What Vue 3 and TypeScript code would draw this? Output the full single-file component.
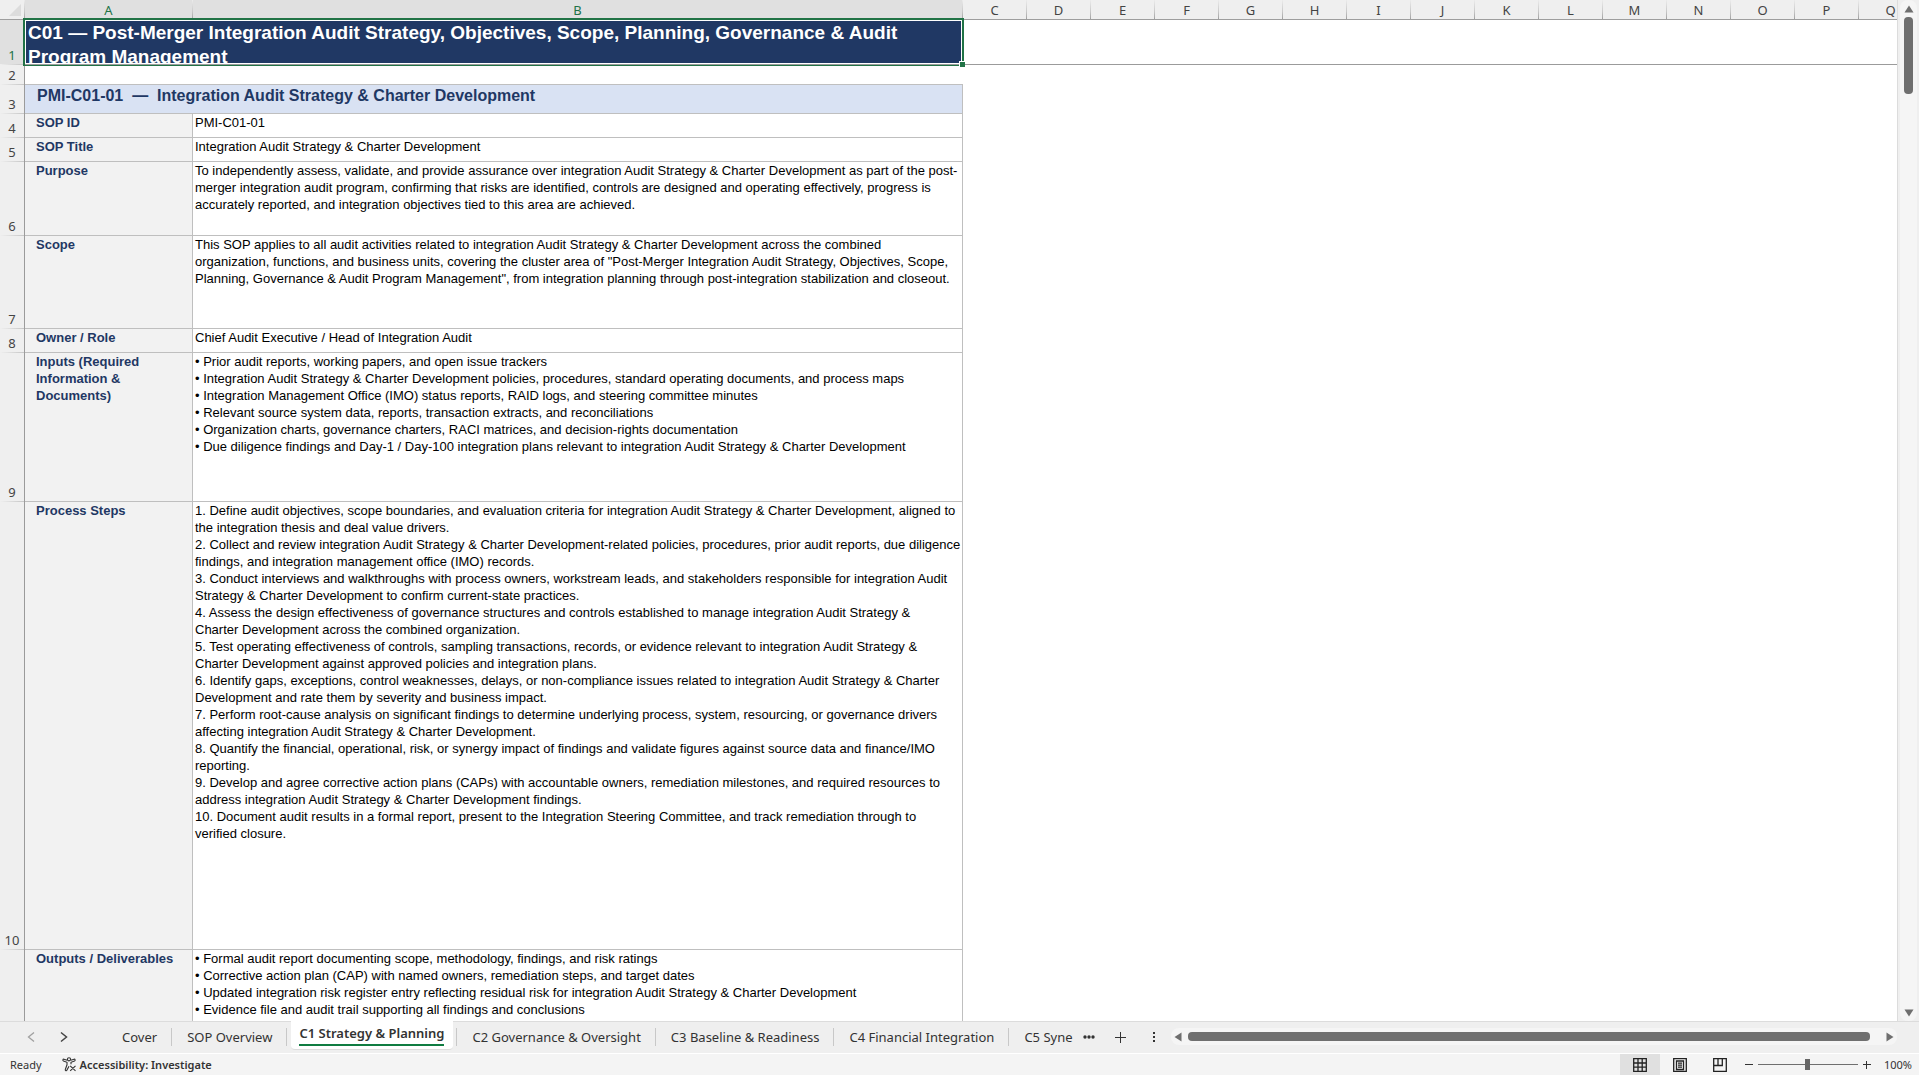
<script setup lang="ts">
interface Row {
  num: number
  size: string
  label: string[]
  lines: string[]
}

const columns: string[] = 'CDEFGHIJKLMNOPQ'.split('')

const sectionTitle = 'PMI-C01-01  —  Integration Audit Strategy & Charter Development'

const rows: Row[] = [
  { num: 4, size: 'r-single', label: ['SOP ID'], lines: ['PMI-C01-01'] },
  { num: 5, size: 'r-single', label: ['SOP Title'], lines: ['Integration Audit Strategy & Charter Development'] },
  {
    num: 6,
    size: 'r-purpose',
    label: ['Purpose'],
    lines: [
      'To independently assess, validate, and provide assurance over integration Audit Strategy & Charter Development as part of the post-',
      'merger integration audit program, confirming that risks are identified, controls are designed and operating effectively, progress is',
      'accurately reported, and integration objectives tied to this area are achieved.',
    ],
  },
  {
    num: 7,
    size: 'r-scope',
    label: ['Scope'],
    lines: [
      'This SOP applies to all audit activities related to integration Audit Strategy & Charter Development across the combined',
      'organization, functions, and business units, covering the cluster area of "Post-Merger Integration Audit Strategy, Objectives, Scope,',
      'Planning, Governance & Audit Program Management", from integration planning through post-integration stabilization and closeout.',
    ],
  },
  { num: 8, size: 'r-single', label: ['Owner / Role'], lines: ['Chief Audit Executive / Head of Integration Audit'] },
  {
    num: 9,
    size: 'r-inputs',
    label: ['Inputs (Required', 'Information &', 'Documents)'],
    lines: [
      '• Prior audit reports, working papers, and open issue trackers',
      '• Integration Audit Strategy & Charter Development policies, procedures, standard operating documents, and process maps',
      '• Integration Management Office (IMO) status reports, RAID logs, and steering committee minutes',
      '• Relevant source system data, reports, transaction extracts, and reconciliations',
      '• Organization charts, governance charters, RACI matrices, and decision-rights documentation',
      '• Due diligence findings and Day-1 / Day-100 integration plans relevant to integration Audit Strategy & Charter Development',
    ],
  },
  {
    num: 10,
    size: 'r-steps',
    label: ['Process Steps'],
    lines: [
      '1. Define audit objectives, scope boundaries, and evaluation criteria for integration Audit Strategy & Charter Development, aligned to',
      'the integration thesis and deal value drivers.',
      '2. Collect and review integration Audit Strategy & Charter Development-related policies, procedures, prior audit reports, due diligence',
      'findings, and integration management office (IMO) records.',
      '3. Conduct interviews and walkthroughs with process owners, workstream leads, and stakeholders responsible for integration Audit',
      'Strategy & Charter Development to confirm current-state practices.',
      '4. Assess the design effectiveness of governance structures and controls established to manage integration Audit Strategy &',
      'Charter Development across the combined organization.',
      '5. Test operating effectiveness of controls, sampling transactions, records, or evidence relevant to integration Audit Strategy &',
      'Charter Development against approved policies and integration plans.',
      '6. Identify gaps, exceptions, control weaknesses, delays, or non-compliance issues related to integration Audit Strategy & Charter',
      'Development and rate them by severity and business impact.',
      '7. Perform root-cause analysis on significant findings to determine underlying process, system, resourcing, or governance drivers',
      'affecting integration Audit Strategy & Charter Development.',
      '8. Quantify the financial, operational, risk, or synergy impact of findings and validate figures against source data and finance/IMO',
      'reporting.',
      '9. Develop and agree corrective action plans (CAPs) with accountable owners, remediation milestones, and required resources to',
      'address integration Audit Strategy & Charter Development findings.',
      '10. Document audit results in a formal report, present to the Integration Steering Committee, and track remediation through to',
      'verified closure.',
    ],
  },
  {
    num: 11,
    size: 'r-outputs',
    label: ['Outputs / Deliverables'],
    lines: [
      '• Formal audit report documenting scope, methodology, findings, and risk ratings',
      '• Corrective action plan (CAP) with named owners, remediation steps, and target dates',
      '• Updated integration risk register entry reflecting residual risk for integration Audit Strategy & Charter Development',
      '• Evidence file and audit trail supporting all findings and conclusions',
    ],
  },
]

const tabs: string[] = [
  'Cover',
  'SOP Overview',
  'C1 Strategy & Planning',
  'C2 Governance & Oversight',
  'C3 Baseline & Readiness',
  'C4 Financial Integration',
  'C5 Syne',
]
const activeTab = 2
</script>

<template>
  <div class="app">
    <div class="work">
      <div class="sheet">
        <table>
          <colgroup>
            <col class="w-num" />
            <col class="w-a" />
            <col class="w-b" />
            <col v-for="c in columns" :key="c" class="w-std" />
          </colgroup>
          <thead>
            <tr>
              <th class="corner"><svg width="24" height="19" viewBox="0 0 24 19"><path d="M21 4v12H9z" fill="#dcdcdc" /></svg></th>
              <th class="sel">A</th>
              <th class="sel">B</th>
              <th v-for="c in columns" :key="c">{{ c }}</th>
            </tr>
          </thead>
          <tbody>
            <tr class="r-title">
              <th class="sel">1</th>
              <td colspan="2" class="title">
                <div class="title-text">C01 — Post-Merger Integration Audit Strategy, Objectives, Scope, Planning, Governance &amp; Audit<br />Program Management</div>
                <div class="selection"></div>
                <div class="handle"></div>
              </td>
              <td :colspan="columns.length" class="frozen"></td>
            </tr>
            <tr class="r-blank">
              <th>2</th>
              <td colspan="2" class="blank"></td>
            </tr>
            <tr class="r-section">
              <th>3</th>
              <td colspan="2" class="section">{{ sectionTitle }}</td>
            </tr>
            <tr v-for="r in rows" :key="r.num" :class="r.size">
              <th>{{ r.num === 11 ? '' : r.num }}</th>
              <td class="label"><div v-for="l in r.label" :key="l">{{ l }}</div></td>
              <td class="text"><div v-for="l in r.lines" :key="l">{{ l }}</div></td>
            </tr>
          </tbody>
        </table>
      </div>
      <div class="vscroll">
        <button aria-label="Scroll up"><svg width="10" height="8" viewBox="0 0 10 8"><path d="M5 0.5 9.5 7.5H.5z" /></svg></button>
        <div class="vthumb"></div>
        <button class="down" aria-label="Scroll down"><svg width="10" height="8" viewBox="0 0 10 8"><path d="M5 7.5 .5 .5h9z" /></svg></button>
      </div>
    </div>

    <div class="tabbar">
      <div class="arrows">
        <button aria-label="Previous sheet"><svg width="8" height="12" viewBox="0 0 8 12"><path d="M7 1.5 1.5 6 7 10.5" fill="none" stroke="#a0a0a0" stroke-width="1.3" /></svg></button>
        <button aria-label="Next sheet"><svg width="8" height="12" viewBox="0 0 8 12"><path d="M1 1.5 6.500 6 1 10.500" fill="none" stroke="#444" stroke-width="1.5" /></svg></button>
      </div>
      <div class="tabs">
        <button v-for="(t, i) in tabs" :key="t" class="tab" :class="{ active: i === activeTab, last: i === tabs.length - 1 }"><span>{{ t }}</span></button>
      </div>
      <button class="more" aria-label="More sheets"><svg width="12" height="4" viewBox="0 0 12 4"><g fill="#333"><circle cx="2" cy="2" r="1.700" /><circle cx="6" cy="2" r="1.700" /><circle cx="10" cy="2" r="1.700" /></g></svg></button>
      <button class="add" aria-label="New sheet"><svg width="11" height="11" viewBox="0 0 11 11"><path d="M5.500 0v11M0 5.500h11" stroke="#333" /></svg></button>
      <button class="kebab" aria-label="Resize tabs"><svg width="4" height="12" viewBox="0 0 4 12"><g fill="#333"><path d="M1 1h2v2H1zM1 5h2v2H1zM1 9h2v2H1z" /></g></svg></button>
      <div class="hscroll">
        <button aria-label="Scroll left"><svg width="8" height="10" viewBox="0 0 8 10"><path d="M.5 5 7.500 .5v9z" /></svg></button>
        <div class="hthumb"></div>
        <button aria-label="Scroll right"><svg width="8" height="10" viewBox="0 0 8 10"><path d="M7.500 5 .5 .5v9z" /></svg></button>
      </div>
    </div>

    <div class="status">
      <span class="ready">Ready</span>
      <button class="access">
        <svg width="15" height="15" viewBox="0 0 15 15" fill="none" stroke="#333" stroke-width="1.100"><circle cx="7" cy="2.300" r="1.600" /><path d="M5.300 3.300 2 2.200C.8 2 .4 3.400 1.500 3.900L5 5.300v2.500L3.300 12.500c-.3 1.200 1.200 1.700 1.700.6L7 9.200M8.700 3.300 12 2.200c1.200-.2 1.600 1.200.5 1.700L9 5.300v1.900M8.200 8.800l5.300 5M13.500 8.800l-5.300 5" /></svg>
        <span>Accessibility: Investigate</span>
      </button>
      <div class="views">
        <button class="on" aria-label="Normal"><svg width="14" height="14" viewBox="0 0 14 14" fill="none" stroke="#222" stroke-width="1.300"><path d="M.7.7h12.600v12.600H.7zM5 .7v12.600M9.200.7v12.600M.7 5h12.600M.7 9.200h12.600" /></svg></button>
        <button aria-label="Page layout"><svg width="14" height="14" viewBox="0 0 14 14" fill="none" stroke="#222" stroke-width="1.300"><path d="M.7.7h12.600v12.600H.7zM3.500 3h7v8.500h-7zM5 5.200h4M5 7.200h4M5 9.200h4" /></svg></button>
        <button aria-label="Page break preview"><svg width="14" height="14" viewBox="0 0 14 14" fill="none" stroke="#222" stroke-width="1.300"><path d="M.7.7h12.600v12.600H.7zM.7 7.500h8.600V.7M5 .7v6.800" /></svg></button>
      </div>
      <button class="zoom-btn" aria-label="Zoom out"><svg width="8" height="8" viewBox="0 0 8 8"><path d="M0 3.500h8" stroke="#333" /></svg></button>
      <input type="range" min="0" max="100" value="50" aria-label="Zoom" />
      <button class="zoom-btn" aria-label="Zoom in"><svg width="8" height="8" viewBox="0 0 8 8"><path d="M0 3.500h8M3.500 0v8" stroke="#333" /></svg></button>
      <button class="percent">100%</button>
    </div>
  </div>
</template>

<style>
body {
  margin: 0;
}
</style>

<style scoped>
.app {
  display: flex;
  flex-direction: column;
  height: 100vh;
  overflow: hidden;
  background: #efefef;
  font-family: "Noto Sans", "Open Sans", sans-serif;
  color: #333;
}
button {
  border: 0;
  padding: 0;
  margin: 0;
  background: none;
  font: inherit;
  color: inherit;
  display: flex;
  align-items: center;
  justify-content: center;
}
svg {
  display: block;
}
.work {
  flex: 1;
  min-height: 0;
  display: flex;
}
.sheet {
  flex: 1;
  min-width: 0;
  overflow: hidden;
  background: #fff;
  border-right: 1px solid #dcdcdc;
}
table {
  table-layout: fixed;
  border-collapse: separate;
  border-spacing: 0;
  width: 1923px;
}
.w-num { width: 25px; }
.w-a { width: 168px; }
.w-b { width: 770px; }
.w-std { width: 64px; }
th, td {
  box-sizing: border-box;
  padding: 0;
  vertical-align: top;
  text-align: left;
}
th {
  font-size: 13px;
  line-height: 17px;
  font-weight: 400;
  color: #444;
  background: #efefef;
  text-align: center;
}
thead th {
  height: 20px;
  padding-top: 2px;
  border-bottom: 1px solid #9b9b9b;
  border-right: 1px solid;
  border-image: linear-gradient(#efefef, #c8c8c8 60%, #9b9b9b) 1;
}
thead th.corner {
  padding: 0;
}
tbody th {
  vertical-align: bottom;
  padding-bottom: 1px;
  border-right: 1px solid #9b9b9b;
  background: linear-gradient(90deg, #efefef, #c6c6c6) bottom / 100% 1px no-repeat #efefef;
}
th.sel {
  color: #217346;
  background-color: #e0e0e0;
}
.r-title { height: 45px; }
.r-blank { height: 20px; }
.r-section { height: 29px; }
.r-single { height: 24px; }
.r-purpose { height: 74px; }
.r-scope { height: 93px; }
.r-inputs { height: 149px; }
.r-steps { height: 448px; }
.r-outputs { height: 149px; }
td {
  font-family: "Liberation Sans", Arial, sans-serif;
  font-size: 13px;
  line-height: 17px;
  color: #000;
  white-space: pre;
  border-right: 1px solid #bfbfbf;
  border-bottom: 1px solid #bfbfbf;
}
.title {
  position: relative;
  background: #203864;
  border-color: #9b9b9b;
}
.title-text {
  box-sizing: border-box;
  height: 44px;
  overflow: hidden;
  border: 1px solid #fff;
  padding-left: 2px;
  font-size: 19px;
  line-height: 24px;
  font-weight: 700;
  color: #fff;
}
.selection {
  position: absolute;
  inset: -2px;
  border: 2px solid #217346;
  border-bottom-width: 1px;
}
.handle {
  position: absolute;
  right: -3px;
  bottom: -3px;
  width: 5px;
  height: 5px;
  background: #217346;
  border: 1px solid #fff;
  border-right: 0;
  border-bottom: 0;
}
.frozen {
  border-right: 0;
  border-color: #9b9b9b;
}
.blank {
  border-right: 0;
}
.section {
  padding-left: 12px;
  font-size: 16px;
  line-height: 21px;
  font-weight: 700;
  color: #1f3864;
  background: #d9e2f3;
}
.label {
  padding-left: 11px;
  font-weight: 700;
  color: #1f3864;
  background: #f2f2f2;
}
.text {
  padding-left: 2px;
}
.vscroll {
  width: 17px;
  margin: 0 2px;
  border-radius: 8px;
  background: #f5f5f5;
  display: flex;
  flex-direction: column;
  align-items: center;
}
.vscroll button {
  height: 17px;
  width: 17px;
}
.vscroll path, .hscroll path {
  fill: #6f6f6f;
}
.vthumb {
  width: 9px;
  height: 77px;
  border-radius: 4px;
  background: #6f6f6f;
}
.vscroll .down {
  margin-top: auto;
}
.tabbar {
  height: 31px;
  display: flex;
  align-items: stretch;
  border-top: 1px solid #dcdcdc;
  border-bottom: 1px solid #fff;
  font-size: 13px;
}
.arrows {
  display: flex;
  align-items: center;
  gap: 25px;
  padding-left: 27px;
  width: 80px;
}
.tabs {
  display: flex;
}
.tab {
  position: relative;
  padding: 0 15px 2px;
  white-space: nowrap;
}
.tab::after {
  content: "";
  position: absolute;
  right: 0;
  top: 6px;
  width: 1px;
  height: 18px;
  background: #c8c8c8;
}
.tab.last {
  padding-right: 0;
}
.tab.last::after {
  display: none;
}
.tab.active {
  padding: 0 13px 0 12px;
  font-weight: 600;
  align-items: flex-start;
}
.tab.active::before {
  content: "";
  position: absolute;
  left: 4px;
  right: 4px;
  top: -1px;
  height: 28px;
  background: #fff;
  border-radius: 0 0 4px 4px;
  border-bottom: 1px solid #dcdcdc;
}
.tab.active span {
  position: relative;
  line-height: 21px;
  padding-top: 1px;
  border-bottom: 2px solid #107c41;
}
.more {
  width: 32px;
}
.more, .add, .kebab, .arrows {
  padding-bottom: 1px;
}
.add {
  width: 32px;
}
.kebab {
  width: 34px;
}
.hscroll {
  flex: 1;
  display: flex;
  align-items: center;
  gap: 2px;
  height: 17px;
  margin: 6px 22px 0 0;
  border-radius: 8px;
  background: #f5f5f5;
}
.hscroll button {
  width: 15px;
  height: 17px;
}
.hthumb {
  flex: 1;
  height: 9px;
  margin-right: 10px;
  border-radius: 4px;
  background: #6f6f6f;
}
.status {
  height: 21px;
  display: flex;
  align-items: center;
  background: #f4f4f4;
  font-size: 11px;
}
.ready {
  padding: 0 20px 0 10px;
}
.access {
  gap: 3px;
  font-weight: 600;
}
.views {
  display: flex;
  align-self: stretch;
  margin-left: auto;
}
.views button {
  width: 40px;
}
.views .on {
  background: #e0e0e0;
}
.zoom-btn {
  width: 18px;
}
input {
  appearance: none;
  width: 100px;
  height: 12px;
  margin: 0;
  background: linear-gradient(#6f6f6f, #6f6f6f) center / 100% 1px no-repeat;
}
input::-webkit-slider-thumb {
  appearance: none;
  width: 5px;
  height: 11px;
  background: #666;
}
.percent {
  padding: 0 7px 0 8px;
}
</style>
